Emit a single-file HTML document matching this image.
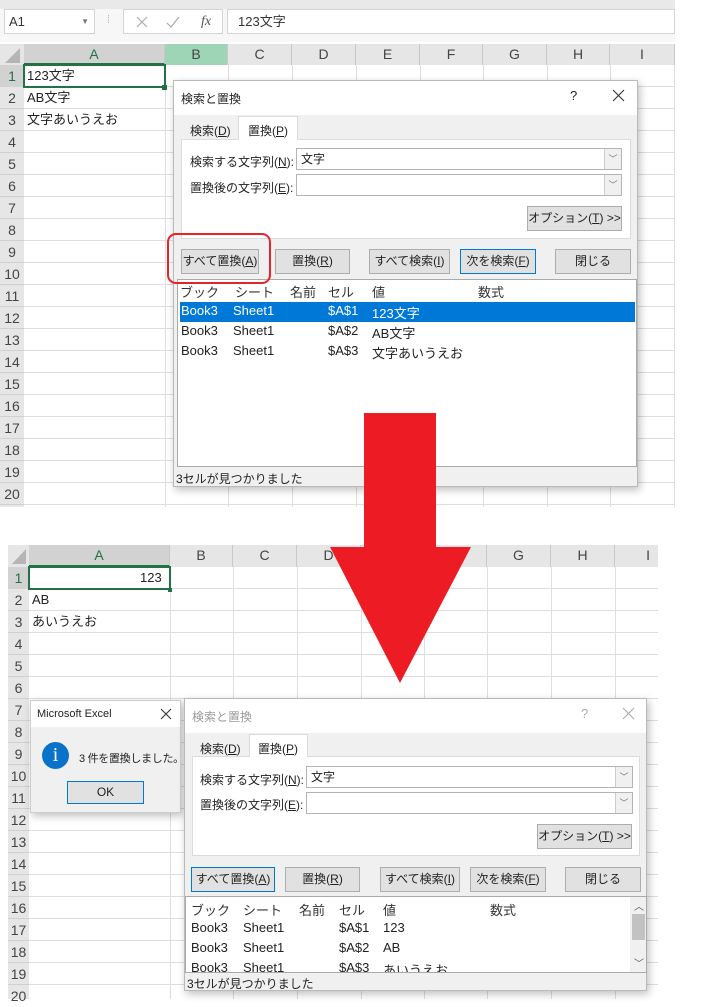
<!DOCTYPE html>
<html><head><meta charset="utf-8">
<style>
*{box-sizing:border-box;margin:0;padding:0}
body{width:701px;height:999px;background:#fff;position:relative;overflow:hidden;font-family:"Liberation Sans","Noto Sans CJK JP",sans-serif;color:#222}
.a{position:absolute}
.hd{background:#e6e6e6;color:#444;font-size:14px;text-align:center;border-right:1px solid #c8c8c8;height:21px;line-height:21px}
.vl{position:absolute;width:1px;background:#dedede}
.cell{position:absolute;font-size:13px;line-height:22px}
.dlg{position:absolute;background:#f0f0f0;border:1px solid #b9b9b9;box-shadow:2px 3px 8px rgba(0,0,0,.25);font-size:12px}
.tb{position:absolute;left:0;top:0;right:0;height:34px;background:#fff}
.btn{position:absolute;height:25px;background:#e1e1e1;border:1px solid #adadad;font-size:12px;text-align:center;line-height:23px;white-space:nowrap}
.inp{position:absolute;height:22px;background:#fff;border:1px solid #b4b4b4;font-size:12px;line-height:20px;padding-left:4px}
.dd{position:absolute;right:0;top:0;width:17px;height:20px;background:#f0f0f0;border-left:1px solid #ccc;color:#777;font-size:9px;text-align:center;line-height:20px}
.lst{position:absolute;background:#fff;border:1px solid #aaa;font-size:13px;overflow:hidden}
.lst div{position:absolute;white-space:nowrap}
</style></head><body>

<!-- TOP SHEET -->
<div class="a" style="left:0;top:0;width:675px;height:9px;background:#e9e9e9"></div>
<div class="a" style="left:0;top:9px;width:675px;height:33px;background:#f7f7f7"></div>
<div class="a" style="left:4px;top:9px;width:91px;height:25px;background:#fff;border:1px solid #d4d4d4;font-size:13px;line-height:23px;padding-left:4px;color:#333">A1<span style="position:absolute;right:5px;font-size:8px;color:#777">▼</span></div>
<div class="a" style="left:107px;top:14px;color:#bbb;font-size:11px">⁞</div>
<div class="a" style="left:123px;top:9px;width:100px;height:25px;background:#fff;border:1px solid #d4d4d4;font-size:14px;line-height:23px;color:#aaa"><svg class="a" style="left:12px;top:6px" width="12" height="12"><path d="M1 1L11 11M11 1L1 11" stroke="#aaa" stroke-width="1.2"/></svg><svg class="a" style="left:42px;top:6px" width="14" height="12"><path d="M1 7L5 11L13 1" stroke="#aaa" stroke-width="1.2" fill="none"/></svg><span style="position:absolute;left:77px;font-style:italic;font-family:'Liberation Serif',serif;color:#555">fx</span></div>
<div class="a" style="left:227px;top:9px;width:448px;height:25px;background:#fff;border:1px solid #d4d4d4;font-size:13px;line-height:23px;padding-left:10px;color:#333">123文字</div>

<div class="a" style="left:0;top:44px;width:24px;height:21px;background:#e6e6e6"><svg width="24" height="21"><polygon points="20,4 20,19 5,19" fill="#b5b5b5"/></svg></div>
<div class="a hd" style="left:24px;top:44px;width:141px;background:#d2d2d2;color:#217346;border-bottom:2px solid #217346">A</div>
<div class="a hd" style="left:165px;top:44px;width:63px;background:#9fd5b7">B</div>
<div class="a hd" style="left:228px;top:44px;width:64px">C</div>
<div class="a hd" style="left:292px;top:44px;width:64px">D</div>
<div class="a hd" style="left:356px;top:44px;width:64px">E</div>
<div class="a hd" style="left:420px;top:44px;width:63px">F</div>
<div class="a hd" style="left:483px;top:44px;width:64px">G</div>
<div class="a hd" style="left:547px;top:44px;width:63px">H</div>
<div class="a hd" style="left:610px;top:44px;width:65px">I</div>
<div class="a" style="left:0;top:65px;width:675px;height:442px;background:repeating-linear-gradient(to bottom,transparent 0,transparent 21px,#dedede 21px,#dedede 22px)"></div>
<div class="a" style="left:0;top:65px;width:24px;height:442px;background:repeating-linear-gradient(to bottom,#e6e6e6 0,#e6e6e6 21px,#d0d0d0 21px,#d0d0d0 22px);font-size:14px;color:#444;text-align:center;line-height:22px">
<div style="background:#d2d2d2;color:#217346">1</div><div>2</div><div>3</div><div>4</div><div>5</div><div>6</div><div>7</div><div>8</div><div>9</div><div>10</div><div>11</div><div>12</div><div>13</div><div>14</div><div>15</div><div>16</div><div>17</div><div>18</div><div>19</div><div>20</div></div>
<div class="vl" style="left:165px;top:65px;height:442px"></div>
<div class="vl" style="left:228px;top:65px;height:442px"></div>
<div class="vl" style="left:292px;top:65px;height:442px"></div>
<div class="vl" style="left:356px;top:65px;height:442px"></div>
<div class="vl" style="left:420px;top:65px;height:442px"></div>
<div class="vl" style="left:483px;top:65px;height:442px"></div>
<div class="vl" style="left:547px;top:65px;height:442px"></div>
<div class="vl" style="left:610px;top:65px;height:442px"></div>
<div class="vl" style="left:674px;top:65px;height:442px"></div>
<div class="a" style="left:23px;top:64px;width:143px;height:24px;border:2px solid #217346"></div>
<div class="a" style="left:162px;top:85px;width:5px;height:5px;background:#217346"></div>
<div class="cell" style="left:27px;top:65px">123文字</div>
<div class="cell" style="left:27px;top:87px">AB文字</div>
<div class="cell" style="left:27px;top:109px">文字あいうえお</div>

<!-- TOP DIALOG -->
<div class="dlg" style="left:173px;top:80px;width:465px;height:407px">
<div class="tb"><span class="a" style="left:7px;top:9px">検索と置換</span><span class="a" style="left:396px;top:7px;font-size:13px">?</span><svg class="a" style="left:438px;top:8px" width="13" height="13"><path d="M1 1L12 12M12 1L1 12" stroke="#333" stroke-width="1.1"/></svg></div>
<div class="a" style="left:7px;top:37px;width:57px;height:22px;padding:4px 0 0 9px">検索(<u>D</u>)</div>
<div class="a" style="left:64px;top:35px;width:60px;height:24px;background:#fff;border:1px solid #dcdcdc;border-bottom:none;padding:5px 0 0 9px;z-index:2">置換(<u>P</u>)</div>
<div class="a" style="left:7px;top:58px;width:450px;height:100px;background:#fff;border:1px solid #dcdcdc"></div>
<div class="a" style="left:16px;top:72px">検索する文字列(<u>N</u>):</div>
<div class="a" style="left:16px;top:98px">置換後の文字列(<u>E</u>):</div>
<div class="inp" style="left:122px;top:67px;width:326px">文字<div class="dd">﹀</div></div>
<div class="inp" style="left:122px;top:93px;width:326px"><div class="dd">﹀</div></div>
<div class="btn" style="left:353px;top:125px;width:95px">オプション(<u>T</u>) &gt;&gt;</div>
<div class="btn" style="left:7px;top:168px;width:78px">すべて置換(<u>A</u>)</div>
<div class="btn" style="left:101px;top:168px;width:75px">置換(<u>R</u>)</div>
<div class="btn" style="left:195px;top:168px;width:81px">すべて検索(<u>I</u>)</div>
<div class="btn" style="left:286px;top:168px;width:76px;border-color:#0078d7">次を検索(<u>F</u>)</div>
<div class="btn" style="left:381px;top:168px;width:76px">閉じる</div>
<div class="lst" style="left:3px;top:198px;width:460px;height:188px">
<div style="left:2px;top:2px;color:#333">ブック</div><div style="left:57px;top:2px;color:#333">シート</div><div style="left:112px;top:2px;color:#333">名前</div><div style="left:150px;top:2px;color:#333">セル</div><div style="left:194px;top:2px;color:#333">値</div><div style="left:300px;top:2px;color:#333">数式</div>
<div style="left:2px;top:22px;width:455px;height:20px;background:#0078d7"></div>
<div style="left:3px;top:23px;color:#fff">Book3</div><div style="left:55px;top:23px;color:#fff">Sheet1</div><div style="left:150px;top:23px;color:#fff">$A$1</div><div style="left:194px;top:23px;color:#fff">123文字</div>
<div style="left:3px;top:43px">Book3</div><div style="left:55px;top:43px">Sheet1</div><div style="left:150px;top:43px">$A$2</div><div style="left:194px;top:43px">AB文字</div>
<div style="left:3px;top:63px">Book3</div><div style="left:55px;top:63px">Sheet1</div><div style="left:150px;top:63px">$A$3</div><div style="left:194px;top:63px">文字あいうえお</div>
</div>
<div class="a" style="left:2px;top:389px">3セルが見つかりました</div>
</div>
<div class="a" style="left:167px;top:233px;width:104px;height:51px;border:2px solid #e8222a;border-radius:9px"></div>

<!-- BOTTOM SHEET -->
<div class="a" style="left:8px;top:545px;width:21px;height:22px;background:#e6e6e6"><svg width="21" height="22"><polygon points="18,4 18,19 4,19" fill="#b5b5b5"/></svg></div>
<div class="a hd" style="left:29px;top:545px;width:141px;height:22px;background:#d2d2d2;color:#217346;border-bottom:2px solid #217346">A</div>
<div class="a hd" style="left:170px;top:545px;width:63px;height:22px">B</div>
<div class="a hd" style="left:233px;top:545px;width:64px;height:22px">C</div>
<div class="a hd" style="left:297px;top:545px;width:64px;height:22px">D</div>
<div class="a hd" style="left:361px;top:545px;width:63px;height:22px">E</div>
<div class="a hd" style="left:424px;top:545px;width:63px;height:22px">F</div>
<div class="a hd" style="left:487px;top:545px;width:64px;height:22px">G</div>
<div class="a hd" style="left:551px;top:545px;width:64px;height:22px">H</div>
<div class="a hd" style="left:615px;top:545px;width:43px;height:22px;border-right:none;text-align:right;padding-right:8px">I</div>
<div class="a" style="left:8px;top:567px;width:650px;height:432px;background:repeating-linear-gradient(to bottom,transparent 0,transparent 21px,#dedede 21px,#dedede 22px)"></div>
<div class="a" style="left:8px;top:567px;width:21px;height:432px;background:repeating-linear-gradient(to bottom,#e6e6e6 0,#e6e6e6 21px,#d0d0d0 21px,#d0d0d0 22px);font-size:14px;color:#444;text-align:center;line-height:22px">
<div style="background:#d2d2d2;color:#217346">1</div><div>2</div><div>3</div><div>4</div><div>5</div><div>6</div><div>7</div><div>8</div><div>9</div><div>10</div><div>11</div><div>12</div><div>13</div><div>14</div><div>15</div><div>16</div><div>17</div><div>18</div><div>19</div><div>20</div></div>
<div class="vl" style="left:170px;top:567px;height:432px"></div>
<div class="vl" style="left:233px;top:567px;height:432px"></div>
<div class="vl" style="left:297px;top:567px;height:432px"></div>
<div class="vl" style="left:361px;top:567px;height:432px"></div>
<div class="vl" style="left:424px;top:567px;height:432px"></div>
<div class="vl" style="left:487px;top:567px;height:432px"></div>
<div class="vl" style="left:551px;top:567px;height:432px"></div>
<div class="vl" style="left:615px;top:567px;height:432px"></div>
<div class="a" style="left:28px;top:566px;width:143px;height:24px;border:2px solid #217346"></div>
<div class="a" style="left:168px;top:588px;width:4px;height:4px;background:#217346"></div>
<div class="cell" style="left:140px;top:567px">123</div>
<div class="cell" style="left:32px;top:589px">AB</div>
<div class="cell" style="left:32px;top:611px">あいうえお</div>

<!-- ARROW -->
<svg class="a" style="left:0;top:0" width="701" height="999"><polygon points="364,413 436,413 436,547 471,547 400,683 330,547 364,547" fill="#ed1c24"/></svg>

<!-- MSGBOX -->
<div class="dlg" style="left:30px;top:700px;width:151px;height:113px;border-color:#ccc">
<div class="tb" style="height:26px"><span class="a" style="left:6px;top:7px;font-size:11px">Microsoft Excel</span><svg class="a" style="left:129px;top:7px" width="12" height="12"><path d="M1 1L11 11M11 1L1 11" stroke="#333" stroke-width="1.1"/></svg></div>
<div class="a" style="left:11px;top:41px;width:27px;height:27px;border-radius:50%;background:#0b72c9;color:#fff;text-align:center;font-size:20px;line-height:27px;font-family:'Liberation Serif',serif">i</div>
<div class="a" style="left:48px;top:49px;font-size:11px;white-space:nowrap;letter-spacing:-0.3px">3 件を置換しました。</div>
<div class="btn" style="left:36px;top:80px;width:77px;height:23px;border-color:#0078d7;line-height:21px">OK</div>
</div>

<!-- BOTTOM DIALOG -->
<div class="dlg" style="left:184px;top:698px;width:463px;height:293px">
<div class="tb"><span class="a" style="left:7px;top:9px;color:#999">検索と置換</span><span class="a" style="left:396px;top:7px;font-size:13px;color:#aaa">?</span><svg class="a" style="left:437px;top:8px" width="13" height="13"><path d="M1 1L12 12M12 1L1 12" stroke="#aaa" stroke-width="1.1"/></svg></div>
<div class="a" style="left:7px;top:37px;width:57px;height:22px;padding:4px 0 0 8px">検索(<u>D</u>)</div>
<div class="a" style="left:64px;top:35px;width:59px;height:23px;background:#fff;border:1px solid #dcdcdc;border-bottom:none;padding:5px 0 0 8px;z-index:2">置換(<u>P</u>)</div>
<div class="a" style="left:7px;top:57px;width:448px;height:100px;background:#fff;border:1px solid #dcdcdc"></div>
<div class="a" style="left:15px;top:72px">検索する文字列(<u>N</u>):</div>
<div class="a" style="left:15px;top:97px">置換後の文字列(<u>E</u>):</div>
<div class="inp" style="left:121px;top:67px;width:327px">文字<div class="dd">﹀</div></div>
<div class="inp" style="left:121px;top:93px;width:327px"><div class="dd">﹀</div></div>
<div class="btn" style="left:352px;top:125px;width:95px">オプション(<u>T</u>) &gt;&gt;</div>
<div class="btn" style="left:6px;top:168px;width:84px;border-color:#0078d7">すべて置換(<u>A</u>)</div>
<div class="btn" style="left:100px;top:168px;width:75px">置換(<u>R</u>)</div>
<div class="btn" style="left:195px;top:168px;width:80px">すべて検索(<u>I</u>)</div>
<div class="btn" style="left:285px;top:168px;width:76px">次を検索(<u>F</u>)</div>
<div class="btn" style="left:380px;top:168px;width:76px">閉じる</div>
<div class="lst" style="left:0;top:197px;width:462px;height:77px">
<div style="left:5px;top:3px;color:#333">ブック</div><div style="left:57px;top:3px;color:#333">シート</div><div style="left:113px;top:3px;color:#333">名前</div><div style="left:153px;top:3px;color:#333">セル</div><div style="left:197px;top:3px;color:#333">値</div><div style="left:304px;top:3px;color:#333">数式</div>
<div style="left:5px;top:23px">Book3</div><div style="left:57px;top:23px">Sheet1</div><div style="left:153px;top:23px">$A$1</div><div style="left:197px;top:23px">123</div>
<div style="left:5px;top:43px">Book3</div><div style="left:57px;top:43px">Sheet1</div><div style="left:153px;top:43px">$A$2</div><div style="left:197px;top:43px">AB</div>
<div style="left:5px;top:63px">Book3</div><div style="left:57px;top:63px">Sheet1</div><div style="left:153px;top:63px">$A$3</div><div style="left:197px;top:63px">あいうえお</div>
<div style="left:444px;top:0;width:17px;height:76px;background:#f0f0f0"></div>
<div style="left:448px;top:1px;font-size:10px;color:#555">︿</div>
<div style="left:446px;top:17px;width:13px;height:26px;background:#c2c2c2"></div>
<div style="left:448px;top:58px;font-size:10px;color:#555">﹀</div>
</div>
<div class="a" style="left:2px;top:276px">3セルが見つかりました</div>
</div>

</body></html>
